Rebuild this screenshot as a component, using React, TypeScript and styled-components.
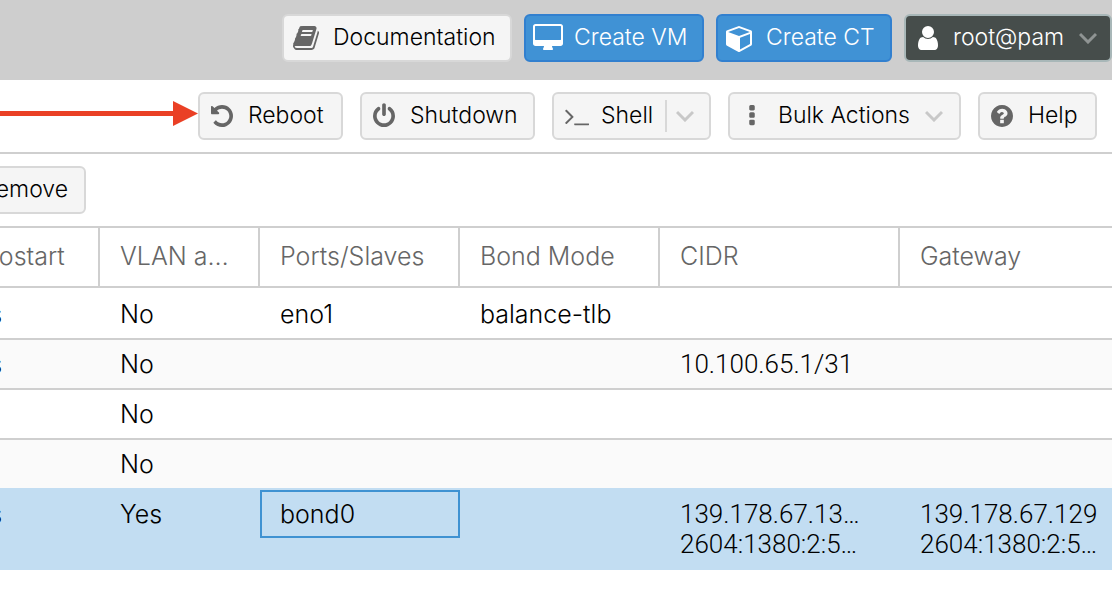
import React from "react";
import styled, { createGlobalStyle, css } from "styled-components";

const GlobalStyle = createGlobalStyle`
  *, *::before, *::after { box-sizing: border-box; }
  body {
    margin: 0;
    background: #fff;
    color: #000;
    font-family: Inter, "Helvetica Neue", "Liberation Sans", sans-serif;
    font-weight: 300;
    overflow-x: hidden;
  }
`;

type Tone = "light" | "blue" | "dark";

const tones = {
  light: css`background: #f5f5f5; border-color: #d8d8d8; color: #000;`,
  blue: css`background: #4092d5; border-color: #3280cf; color: #fff;`,
  dark: css`background: #464d4b; border-color: #a8b7b8; color: #fff;`,
};

const Page = styled.div`
  width: 100%;
  overflow: hidden;
`;

const TopBar = styled.header`
  display: flex;
  justify-content: flex-end;
  align-items: center;
  gap: 12px;
  padding: 14px 0 18px;
  background: #cecece;
`;

const Toolbar = styled.div`
  display: flex;
  align-items: center;
  gap: 17px;
  padding: 12px 15px 12px 0;
  border-bottom: 2px solid #cfcfcf;
`;

const GridToolbar = styled.div`
  display: flex;
  padding: 12px 0;
  margin-left: -60px;
`;

const Button = styled.button<{ $tone?: Tone; $width: number; $gap?: number; $inset?: number }>`
  display: flex;
  flex: none;
  align-items: center;
  gap: ${(p) => p.$gap ?? 15}px;
  width: ${(p) => p.$width}px;
  height: 48px;
  padding: 0 16px 0 ${(p) => p.$inset ?? 11}px;
  border: 2px solid;
  border-radius: 6px;
  font: inherit;
  font-size: 23px;
  line-height: 28px;
  white-space: nowrap;
  ${(p) => tones[p.$tone ?? "light"]}
`;

const TextButton = styled(Button)`
  justify-content: flex-end;
`;

const Label = styled.span`
  flex: none;
  padding-bottom: 2px;
`;

const IconSvg = styled.svg<{ $color: string }>`
  display: block;
  flex: none;
  fill: ${(p) => p.$color};
`;

const Caret = styled.svg`
  display: block;
  flex: none;
  margin-left: auto;
  fill: none;
  stroke-width: 3;
`;

/* Drop-down part of a split button, set off by a rule. */
const SplitArrow = styled.span`
  display: flex;
  align-items: center;
  height: 32px;
  margin-left: auto;
  padding-left: 9px;
  border-left: 2px solid #d8d8d8;
`;

const Arrow = styled.div`
  display: flex;
  flex: 1;
  align-items: center;
  min-width: 0;
  margin-right: -17px;
  padding-bottom: 6px;
`;

const ArrowLine = styled.span`
  flex: 1;
  height: 5px;
  background: #ea4025;
`;

const Table = styled.table`
  width: 1200px;
  margin-left: -60px;
  table-layout: fixed;
  border-collapse: separate;
  border-spacing: 0;
  font-size: 25px;
  line-height: 30px;
`;

const HeadCell = styled.th`
  padding: 13px 18px 15px 20px;
  border-top: 2px solid #cfcfcf;
  border-bottom: 2px solid #cfcfcf;
  border-right: 2px solid #cfcfcf;
  color: #666;
  font-weight: 300;
  text-align: left;
  white-space: nowrap;
  overflow: hidden;
  text-overflow: ellipsis;
`;

const Cell = styled.td<{ $address?: boolean }>`
  padding: 9px 20px;
  border-top: 2px solid #cfcfcf;
  vertical-align: top;
  ${(p) =>
    p.$address &&
    css`
      font-family: Roboto, sans-serif;
      font-size: 26px;
    `}
`;

const Line = styled.div`
  white-space: nowrap;
`;

const FocusLine = styled(Line)`
  margin: -9px -20px;
  padding: 7px 18px;
  border: 2px solid #3f92d2;
`;

const Row = styled.tr<{ $selected?: boolean }>`
  &:nth-child(even) { background: #fafafa; }
  &:first-child > td { border-top-color: transparent; }
  ${(p) =>
    p.$selected &&
    css`
      && { background: #c2ddf2; }
      & > td {
        border-top-color: #c2ddf2;
        border-bottom: 2px solid #c2ddf2;
      }
    `}
`;

const square = (y: number) =>
  `M320 ${y}v192q0 40-28 68t-68 28h-192q-40 0-68-28t-28-68v-192q0-40 28-68t68-28h192q40 0 68 28t28 68z`;

const icons = {
  book: { x: 64, w: 1664, d: "M1703 478q40 57 18 129l-275 906q-19 64-76.5 107.5t-122.5 43.5h-923q-77 0-148.5-53.5t-99.5-131.5q-24-67-2-127 0-4 3-27t4-37q1-8-3-21.5t-3-19.5q2-11 8-21t16.5-23.5 16.5-23.5q23-38 45-91.5t30-91.5q3-10 .5-30t-.5-28q3-11 17-28t17-23q21-36 42-92t25-90q1-9-2.5-32t.5-28q4-13 22-30.5t22-22.5q19-26 42.5-84.5t27.5-96.5q1-8-3-25.5t-2-26.5q2-8 9-18t18-23 17-21q8-12 16.5-30.5t15-35 16-36 19.5-32 26.5-23.5 36-11.5 47.5 5.5l-1 3q38-9 51-9h761q74 0 114 56t18 130l-274 906q-36 119-71.5 153.5t-128.5 34.5h-869q-27 0-38 15-11 16-1 43 24 70 144 70h923q29 0 56-15.5t35-41.5l300-987q7-22 5-57 38 15 59 43zm-1064 2q-4 13 2 22.5t20 9.5h608q13 0 25.5-9.5t16.5-22.5l21-64q4-13-2-22.5t-20-9.5h-608q-13 0-25.5 9.5t-16.5 22.5zm-83 256q-4 13 2 22.5t20 9.5h608q13 0 25.5-9.5t16.5-22.5l21-64q4-13-2-22.5t-20-9.5h-608q-13 0-25.5 9.5t-16.5 22.5z" },
  desktop: { x: 64, w: 1920, d: "M1856 992v-832q0-13-9.5-22.5t-22.5-9.5h-1600q-13 0-22.5 9.5t-9.5 22.5v832q0 13 9.5 22.5t22.5 9.5h1600q13 0 22.5-9.5t9.5-22.5zm128-832v1088q0 66-47 113t-113 47h-544q0 37 16 77.5t32 71 16 43.5q0 26-19 45t-45 19h-512q-26 0-45-19t-19-45q0-14 16-44t32-70 16-78h-544q-66 0-113-47t-47-113v-1088q0-66 47-113t113-47h1600q66 0 113 47t47 113z" },
  cube: { x: 0, w: 1664, d: "M896 1629l640-349v-636l-640 233v752zm-64-865l698-254-698-254-698 254zm832-252v768q0 35-18 65t-49 47l-704 384q-28 16-61 16t-61-16l-704-384q-31-17-49-47t-18-65v-768q0-40 23-73t61-47l704-256q22-8 44-8t44 8l704 256q38 14 61 47t23 73z" },
  user: { x: 256, w: 1280, d: "M1536 1399q0 109-62.5 187t-150.5 78h-854q-88 0-150.5-78t-62.5-187q0-85 8.5-160.5t31.5-152 58.5-131 94-89 134.5-34.5q131 128 313 128t313-128q76 0 134.5 34.5t94 89 58.5 131 31.5 152 8.5 160.5zm-256-887q0 159-112.5 271.5t-271.5 112.5-271.5-112.5-112.5-271.5 112.5-271.5 271.5-112.5 271.5 112.5 112.5 271.5z" },
  undo: { x: 128, w: 1536, d: "M1664 896q0 156-61 298t-164 245-245 164-298 61q-172 0-327-72.5t-264-204.5q-7-10-6.5-22.5t8.5-20.5l137-138q10-9 25-9 16 2 23 12 73 95 179 147t225 52q104 0 198.5-40.5t163.5-109.5 109.5-163.5 40.5-198.5-40.5-198.5-109.5-163.5-163.5-109.5-198.5-40.5q-98 0-188 35.5t-160 101.5l137 138q31 30 14 69-17 40-59 40h-448q-26 0-45-19t-19-45v-448q0-42 40-59 39-17 69 14l130 129q107-101 244.5-156.5t284.5-55.5q156 0 298 61t245 164 164 245 61 298z" },
  power: { x: 128, w: 1536, d: "M1664 896q0 156-61 298t-164 245-245 164-298 61-298-61-245-164-164-245-61-298q0-182 80.5-343t226.5-270q43-32 95.5-25t83.5 50q32 42 24.5 94.5t-49.5 84.5q-98 74-151.5 181t-53.5 228q0 104 40.5 198.5t109.5 163.5 163.5 109.5 198.5 40.5 198.5-40.5 163.5-109.5 109.5-163.5 40.5-198.5q0-121-53.5-228t-151.5-181q-42-32-49.5-84.5t24.5-94.5q31-43 84-50t95 25q146 109 226.5 270t80.5 343zm-640-768v640q0 52-38 90t-90 38-90-38-38-90v-640q0-52 38-90t90-38 90 38 38 90z" },
  terminal: { x: 64, w: 1664, d: "M649 983l-466 466q-10 10-23 10t-23-10l-50-50q-10-10-10-23t10-23l393-393-393-393q-10-10-10-23t10-23l50-50q10-10 23-10t23 10l466 466q10 10 10 23t-10 23zm1079 457v64q0 14-9 23t-23 9h-960q-14 0-23-9t-9-23v-64q0-14 9-23t23-9h960q14 0 23 9t9 23z" },
  dots: { x: -640, w: 1536, d: square(224) + square(736) + square(1248) },
  help: { x: 128, w: 1536, d: "M1024 1376v-192q0-14-9-23t-23-9h-192q-14 0-23 9t-9 23v192q0 14 9 23t23 9h192q14 0 23-9t9-23zm256-672q0-88-55.5-163t-138.5-116-170-41q-243 0-371 213-15 24 8 42l132 100q7 6 19 6 16 0 25-12 53-68 86-92 34-24 86-24 48 0 85.5 26t37.5 59q0 38-20 61t-68 45q-63 28-115.5 86.5t-52.5 125.5v36q0 14 9 23t23 9h192q14 0 23-9t9-23q0-19 21.5-49.5t54.5-49.5q32-18 49-28.5t46-35 44.5-48 28-60.5 12.5-81zm384 192q0 209-103 385.5t-279.5 279.5-385.5 103-385.5-103-279.5-279.5-103-385.5 103-385.5 279.5-279.5 385.5-103 385.5 103 279.5 279.5 103 385.5z" },
};

function Icon({ name, size = 26, color = "#666" }: { name: keyof typeof icons; size?: number; color?: string }) {
  const { x, w, d } = icons[name];
  return (
    <IconSvg
      $color={color}
      width={Math.round((w / 1792) * size)}
      height={size}
      viewBox={`${x} 0 ${w} 1792`}
      aria-hidden="true"
    >
      <path d={d} />
    </IconSvg>
  );
}

function Chevron({ color = "#c8c8c8" }: { color?: string }) {
  return (
    <Caret width="18" height="12" viewBox="0 0 18 12" stroke={color} aria-hidden="true">
      <path d="M1 2l8 8 8-8" />
    </Caret>
  );
}

const columns = [
  { title: "Autostart", width: 160 },
  { title: "VLAN aware", width: 160 },
  { title: "Ports/Slaves", width: 200 },
  { title: "Bond Mode", width: 200 },
  { title: "CIDR", width: 240 },
  { title: "Gateway", width: 240 },
];

const rows: { cells: string[][]; selected?: boolean }[] = [
  { cells: [["Yes"], ["No"], ["eno1"], ["balance-tlb"], [], []] },
  { cells: [["Yes"], ["No"], [], [], ["10.100.65.1/31"], []] },
  { cells: [[], ["No"], [], [], [], []] },
  { cells: [[], ["No"], [], [], [], []] },
  {
    selected: true,
    cells: [
      ["Yes"],
      ["Yes"],
      ["bond0"],
      [],
      ["139.178.67.13…", "2604:1380:2:5…"],
      ["139.178.67.129", "2604:1380:2:5…"],
    ],
  },
];

export default function App() {
  return (
    <Page>
      <GlobalStyle />
      <TopBar>
        <Button $width={230} $inset={9} $gap={14}>
          <Icon name="book" size={28} />
          <Label>Documentation</Label>
        </Button>
        <Button $tone="blue" $width={180} $inset={7} $gap={11}>
          <Icon name="desktop" size={28} color="#fff" />
          <Label>Create VM</Label>
        </Button>
        <Button $tone="blue" $width={176} $inset={8} $gap={14}>
          <Icon name="cube" size={28} color="#fff" />
          <Label>Create CT</Label>
        </Button>
        <Button $tone="dark" $width={208} $inset={12}>
          <Icon name="user" size={28} color="#fff" />
          <Label>root@pam</Label>
          <Chevron color="#8f9493" />
        </Button>
      </TopBar>
      <Toolbar>
        <Arrow>
          <ArrowLine />
          <svg width="25" height="25" viewBox="0 0 25 25" aria-hidden="true">
            <path d="M0 0L25 12.5L0 25z" fill="#ea4025" />
          </svg>
        </Arrow>
        <Button $width={145}>
          <Icon name="undo" />
          <Label>Reboot</Label>
        </Button>
        <Button $width={175}>
          <Icon name="power" />
          <Label>Shutdown</Label>
        </Button>
        <Button $width={159} $gap={12}>
          <Icon name="terminal" />
          <Label>Shell</Label>
          <SplitArrow>
            <Chevron />
          </SplitArrow>
        </Button>
        <Button $width={233}>
          <Icon name="dots" />
          <Label>Bulk Actions</Label>
          <Chevron />
        </Button>
        <Button $width={119}>
          <Icon name="help" />
          <Label>Help</Label>
        </Button>
      </Toolbar>
      <GridToolbar>
        <TextButton $width={146}>
          <Label>Remove</Label>
        </TextButton>
      </GridToolbar>
      <Table>
        <colgroup>
          {columns.map((c) => (
            <col key={c.title} width={c.width} />
          ))}
        </colgroup>
        <thead>
          <tr>
            {columns.map((c) => (
              <HeadCell key={c.title} scope="col">
                {c.title}
              </HeadCell>
            ))}
          </tr>
        </thead>
        <tbody>
          {rows.map((row, i) => (
            <Row key={i} $selected={row.selected}>
              {row.cells.map((lines, j) => (
                <Cell key={j} $address={j > 3}>
                  {lines.map((line) =>
                    row.selected && j === 2 ? (
                      <FocusLine key={line}>{line}</FocusLine>
                    ) : (
                      <Line key={line}>{line}</Line>
                    )
                  )}
                </Cell>
              ))}
            </Row>
          ))}
        </tbody>
      </Table>
    </Page>
  );
}
